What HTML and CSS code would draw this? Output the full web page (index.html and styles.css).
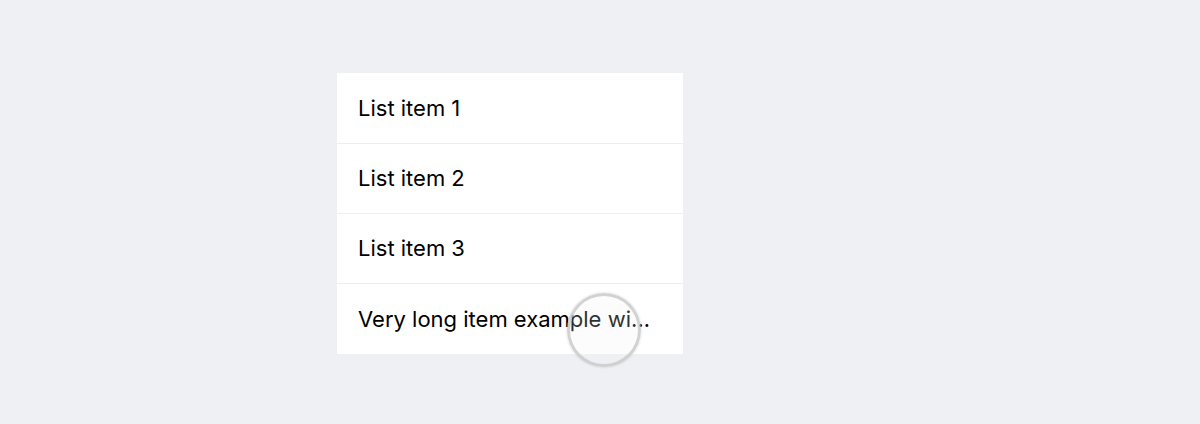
FILE: index.html
```html
<!DOCTYPE html>
<html lang="en">
<head>
  <meta charset="UTF-8">
  <title>List</title>
  <link rel="stylesheet" href="styles.css">
</head>
<body>
  <div class="page">
    <ul class="list">
      <li class="list-item">List item 1</li>
      <li class="list-item">List item 2</li>
      <li class="list-item">List item 3</li>
      <li class="list-item">Very long item example with text that does not fit</li>
    </ul>
    <div class="touch"></div>
  </div>
</body>
</html>
```
FILE: styles.css
```css
body {
  margin: 0;
  background: #eff0f4;
  font-family: Inter, "Noto Sans", sans-serif;
}
.page {
  position: relative;
  height: 424px;
  padding-top: 73px;
  box-sizing: border-box;
}
.list {
  list-style: none;
  margin: 0 0 0 337px;
  padding: 0;
  width: 346px;
  background: #fff;
}
.list-item {
  height: 69px;
  line-height: 69px;
  padding: 0 32px 0 21px;
  font-size: 22px;
  color: #000;
  white-space: nowrap;
  overflow: hidden;
  text-overflow: ellipsis;
  border-top: 1px solid #eceef2;
}
.list-item:first-child,
.list-item:last-child {
  height: 70px;
  line-height: 70px;
}
.list-item:first-child {
  border-top: none;
}
.touch {
  position: absolute;
  left: 567px;
  top: 293px;
  width: 68px;
  height: 68px;
  border-radius: 50%;
  border: 3px solid rgba(200, 200, 200, 0.8);
  background: rgba(240, 240, 240, 0.2);
  box-shadow: 0 0 3px rgba(0, 0, 0, 0.15);
}
```
